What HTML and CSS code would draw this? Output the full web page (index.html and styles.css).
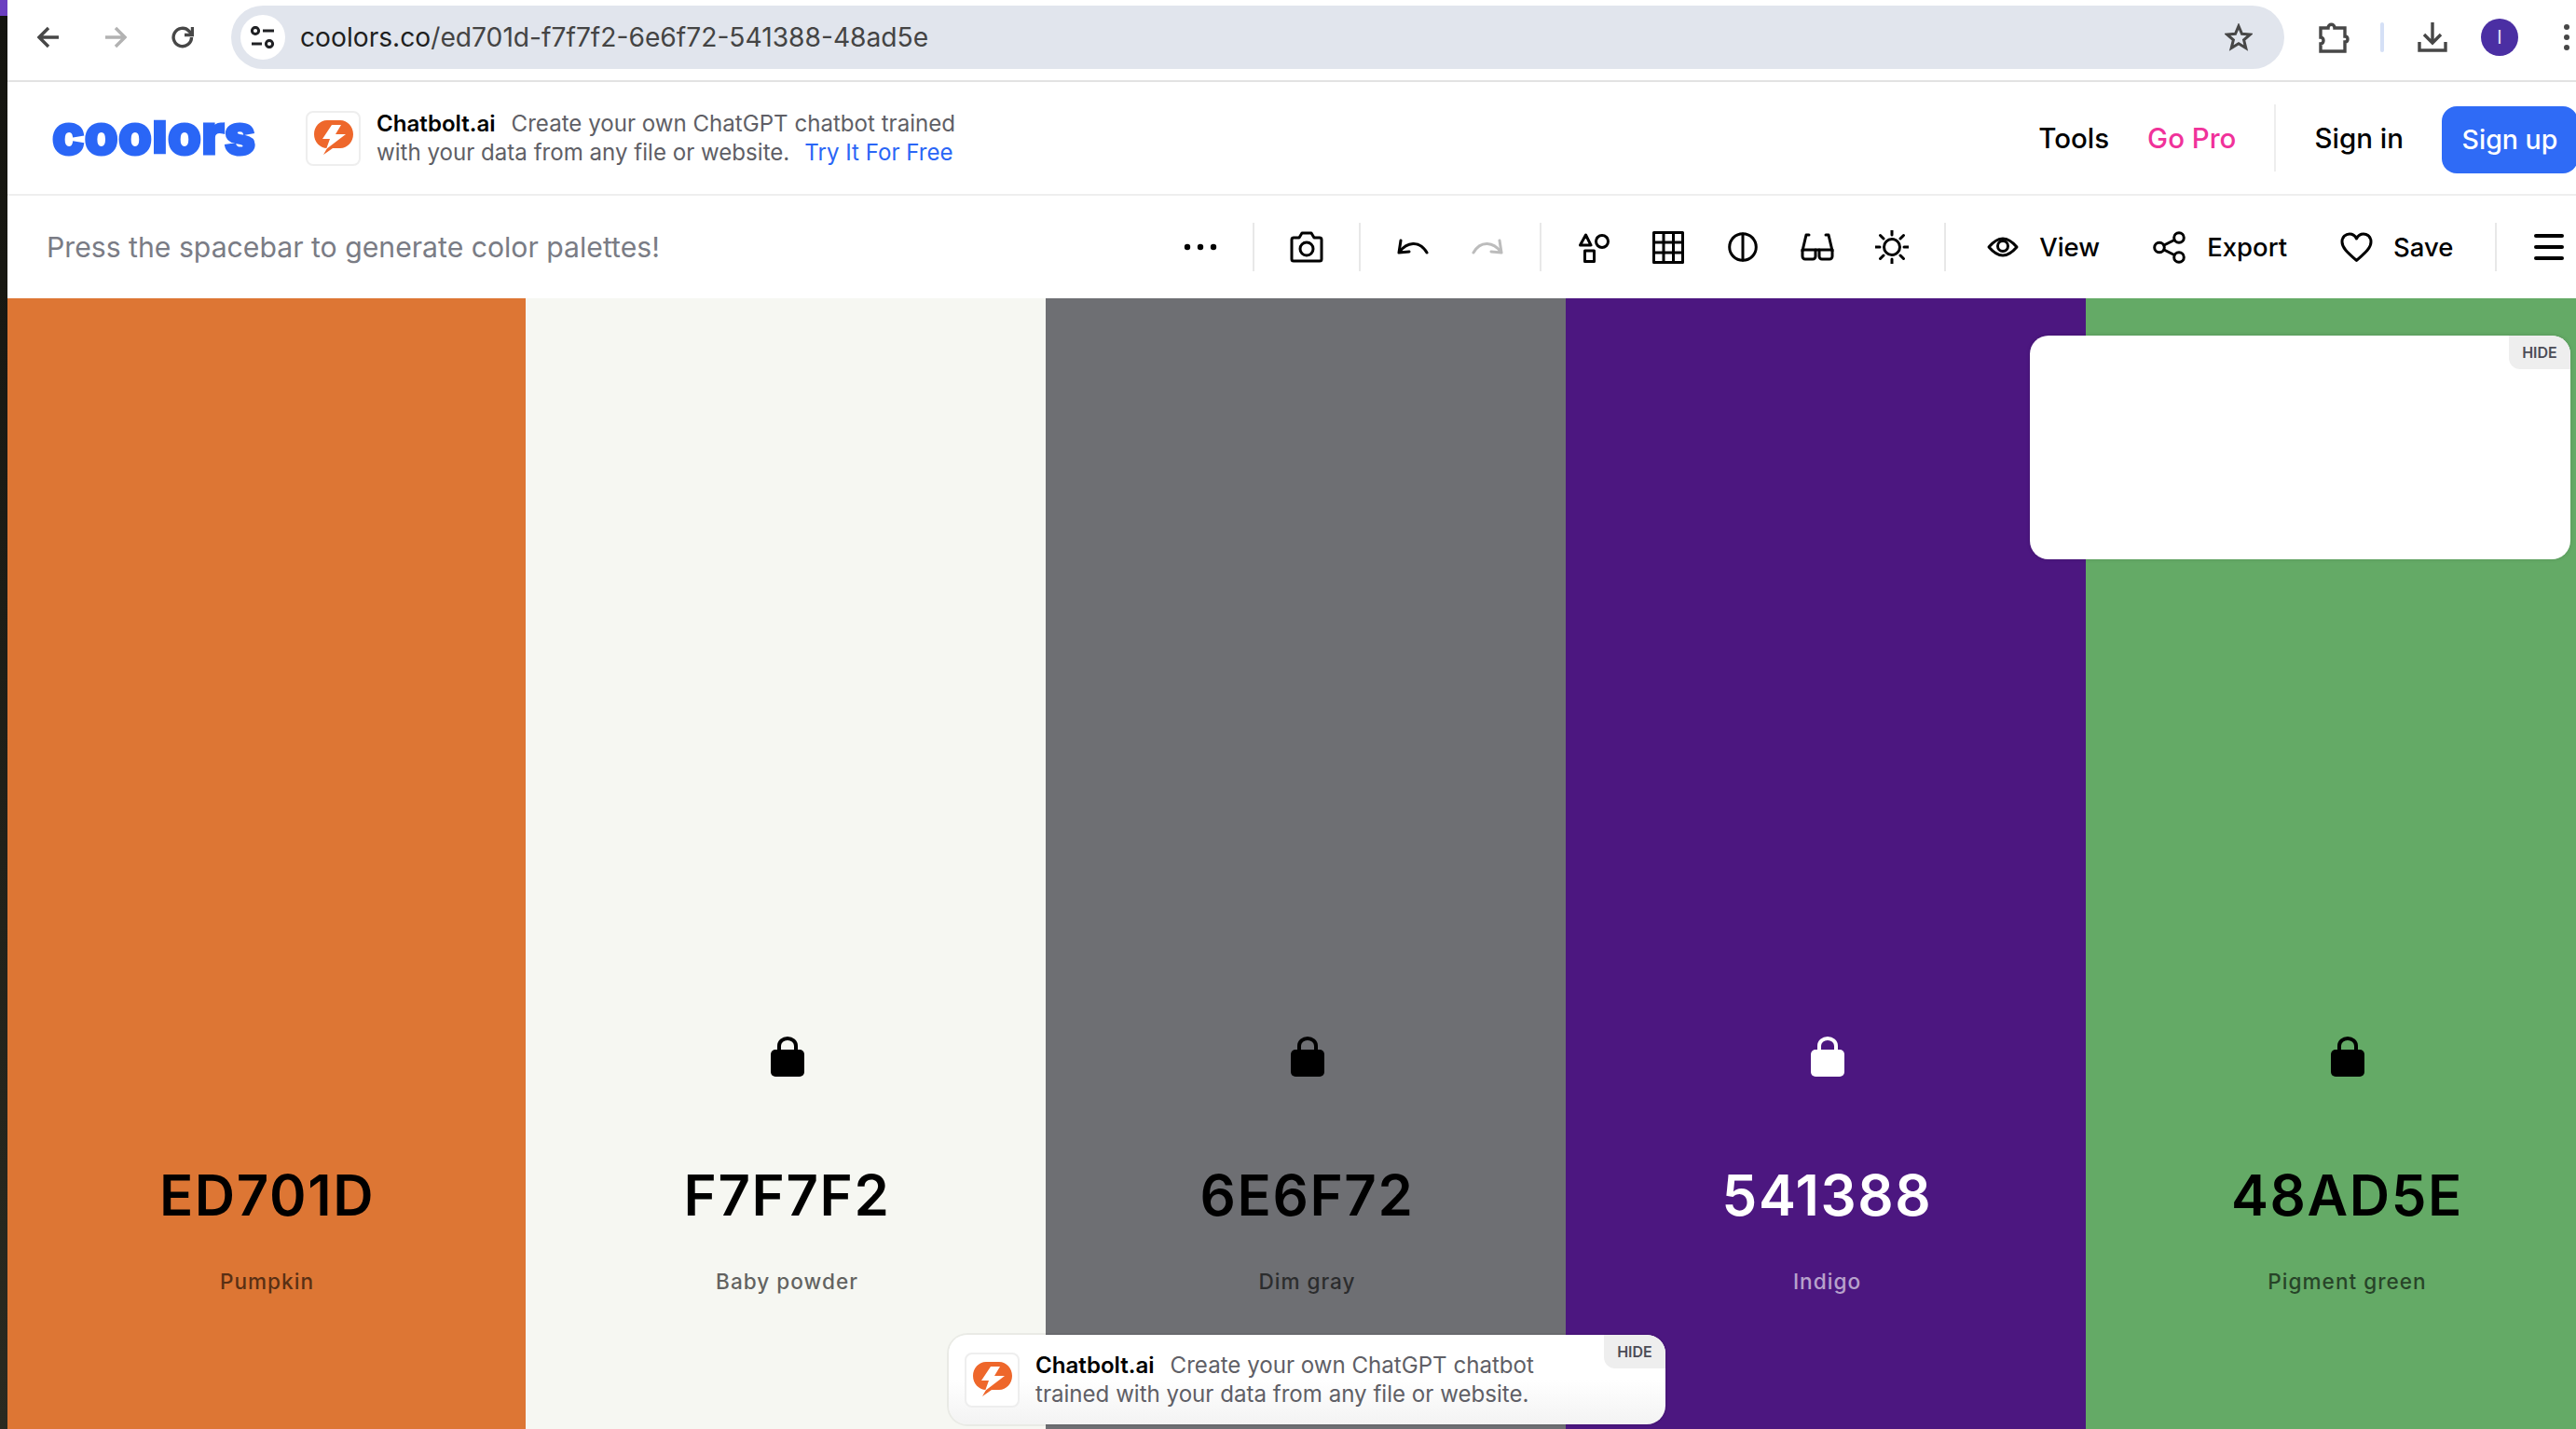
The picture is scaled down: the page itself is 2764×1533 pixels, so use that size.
FILE: index.html
```html
<!DOCTYPE html>
<html lang="en">
<head>
    <meta charset="UTF-8">
    <meta name="viewport" content="width=device-width, initial-scale=1.0">
    <title>Coolors palette</title>
    <link rel="stylesheet" href="styles.css">
</head>
<body>
<div class="screen">
    <div class="desktop-edge"></div>
    <div class="window">
        <div class="page">

            <!-- browser bar -->
            <div class="chrome">
                <div class="chrome-btn">
                    <svg width="24" height="24" viewBox="0 0 24 24" class="chrome-ico"><path d="M23 12H2M12 2 2 12l10 10"/></svg>
                </div>
                <div class="chrome-btn">
                    <svg width="24" height="24" viewBox="0 0 24 24" class="chrome-ico off"><path d="M1 12h21M12 2l10 10-10 10"/></svg>
                </div>
                <div class="chrome-btn">
                    <svg width="24" height="24" viewBox="0 0 24 24" class="chrome-ico"><path d="M21.500 12a9.700 9.700 0 1 1-2.800-6.800L22 8.500"/><path d="M22.500 1v8.500H14"/></svg>
                </div>
                <div class="address">
                    <div class="site-info">
                        <svg width="26" height="24" viewBox="0 0 26 24" class="tune-ico"><circle cx="5" cy="5" r="3.600"/><path d="M13 5h12M1 19h11"/><circle cx="20" cy="19" r="3.600"/></svg>
                    </div>
                    <span class="url">coolors.co<span class="url-path">/ed701d-f7f7f2-6e6f72-541388-48ad5e</span></span>
                    <svg width="30" height="30" viewBox="0 0 30 30" class="chrome-ico star"><path d="m15 3 3.500 8.300 9 .7-6.900 5.800 2.200 8.800-7.800-4.800-7.800 4.800 2.200-8.800L2.500 12l9-.7z"/></svg>
                </div>
                <div class="chrome-btn">
                    <svg width="34" height="34" viewBox="0 0 34 34" class="chrome-ico"><path d="M3 7h8c0-5 7-5 7 0h11v9c4 0 4 6 0 6v10H3v-8c4 0 4-7 0-7z"/></svg>
                </div>
                <div class="chrome-divider"></div>
                <div class="chrome-btn">
                    <svg width="32" height="32" viewBox="0 0 32 32" class="chrome-ico"><path d="M16 0v21M7 13l9 9 9-9M2 21v9h28v-9"/></svg>
                </div>
                <div class="chrome-btn"><div class="avatar">I</div></div>
                <div class="chrome-btn">
                    <div class="kebab"><span></span><span></span><span></span></div>
                </div>
            </div>

            <!-- top nav with sponsor -->
            <div class="topnav">
                <div class="logo">coo<span class="logo-l">l</span>ors</div>
                <div class="ad-logo">
                    <svg width="42" height="38" viewBox="0 0 42 38"><path class="bolt-bg" d="M14 0h14c8 0 14 7 14 15s-6 15-14 15H20L10 37l4-7C6 30 0 23 0 15S6 0 14 0z"/><path class="bolt-fg" d="M19 5 9 20h8l-4 11 21-16H23l6-10z"/></svg>
                </div>
                <div class="ad-text">
                    <b>Chatbolt.ai</b><span class="ad-gap">Create your own ChatGPT chatbot trained</span><br>
                    with your data from any file or website.<a class="ad-link" href="#">Try It For Free</a>
                </div>
                <div class="nav-right">
                    <a class="nav-link" href="#">Tools</a>
                    <a class="nav-link pro" href="#">Go Pro</a>
                    <div class="nav-divider"></div>
                    <a class="nav-link" href="#">Sign in</a>
                    <a class="signup" href="#">Sign up</a>
                </div>
            </div>

            <!-- toolbar -->
            <div class="toolbar">
                <div class="hint">Press the spacebar to generate color palettes!</div>
                <div class="tool-group">
                    <div class="tool">
                        <svg width="36" height="8" viewBox="0 0 36 8" class="solid"><circle cx="4" cy="4" r="3.200"/><circle cx="18" cy="4" r="3.200"/><circle cx="32" cy="4" r="3.200"/></svg>
                    </div>
                </div>
                <div class="tool-group">
                    <div class="tool">
                        <svg width="36" height="34" viewBox="0 0 36 34" class="line"><path d="M4 7h6l3-5h10l3 5h6a2 2 0 0 1 2 2v21a2 2 0 0 1-2 2H4a2 2 0 0 1-2-2V9a2 2 0 0 1 2-2z"/><circle cx="18" cy="19" r="7"/></svg>
                    </div>
                </div>
                <div class="tool-group">
                    <div class="tool">
                        <svg width="34" height="18" viewBox="0 0 34 18" class="line"><path d="M4 2 2 15l11-1M3 14C10 4 24 1 32 15"/></svg>
                    </div>
                    <div class="tool">
                        <svg width="34" height="18" viewBox="0 0 34 18" class="line faded"><path d="m30 2 2 13-11-1M31 14C24 4 10 1 2 15"/></svg>
                    </div>
                </div>
                <div class="tool-group">
                    <div class="tool">
                        <svg width="34" height="33" viewBox="0 0 34 33" class="line"><path d="M8.500 3 14 14H2.500z"/><circle cx="26" cy="10" r="6.500"/><rect x="7.500" y="20" width="10" height="11.500"/></svg>
                    </div>
                    <div class="tool">
                        <svg width="34" height="35" viewBox="0 0 34 35" class="line"><rect x="1.500" y="1.500" width="31" height="32"/><path d="M12 1.500v32M22.500 1.500v32M1.500 12h31M1.500 23h31"/></svg>
                    </div>
                    <div class="tool">
                        <svg width="32" height="32" viewBox="0 0 32 32" class="line"><circle cx="16" cy="16" r="14.300"/><path d="M16 2v28"/></svg>
                    </div>
                    <div class="tool">
                        <svg width="36" height="30" viewBox="0 0 36 30" class="line"><path d="M9 2H6L2 19M27 2h3l4 17M2 18h32"/><path d="M2 18v7a3 3 0 0 0 3 3h8a3 3 0 0 0 3-3v-7M20 18v7a3 3 0 0 0 3 3h8a3 3 0 0 0 3-3v-7"/></svg>
                    </div>
                    <div class="tool">
                        <svg width="36" height="36" viewBox="0 0 36 36" class="line"><circle cx="18" cy="18" r="8.500"/><path d="M18 0v5M18 31v5M0 18h5M31 18h5M5.500 5.500 9 9M27 27l3.500 3.500M5.500 30.500 9 27M27 9l3.500-3.500"/></svg>
                    </div>
                </div>
                <div class="tool-group">
                    <div class="text-tool">
                        <svg width="34" height="22" viewBox="0 0 34 22" class="line"><path d="M2 11C8 4 12 2 17 2s9 2 15 9c-6 7-10 9-15 9S8 18 2 11z"/><circle cx="17" cy="10" r="5.500"/></svg>
                        <span>View</span>
                    </div>
                    <div class="text-tool">
                        <svg width="36" height="35" viewBox="0 0 36 35" class="line"><circle cx="7" cy="17.500" r="5.300"/><circle cx="28" cy="7" r="5.300"/><circle cx="28" cy="28" r="5.300"/><path d="m12 15 11-5.500M12 20l11 5.500"/></svg>
                        <span>Export</span>
                    </div>
                    <div class="text-tool">
                        <svg width="35" height="33" viewBox="0 0 35 33" class="line"><path d="M17.500 30.500C8 22 2 17 2 10.500 2 5 6 2 10 2c3.500 0 6 1.800 7.500 5 1.500-3.200 4-5 7.500-5 4 0 8 3 8 8.500 0 6.500-6 11.500-15.500 20z"/></svg>
                        <span>Save</span>
                    </div>
                </div>
                <div class="tool-group last">
                    <div class="tool">
                        <div class="burger"><span></span><span></span><span></span></div>
                    </div>
                </div>
            </div>

            <!-- palette -->
            <div class="palette">
                <div class="swatch pumpkin">
                    <div class="lock-slot"></div>
                    <div class="hex">ED701D</div>
                    <div class="name">Pumpkin</div>
                </div>
                <div class="swatch powder">
                    <div class="lock-slot">
                        <svg width="36" height="43" viewBox="0 0 36 43" class="lock"><path class="shackle" d="M9 18V10a9 8 0 0 1 18 0v8"/><rect y="14" width="36" height="29" rx="5"/></svg>
                    </div>
                    <div class="hex">F7F7F2</div>
                    <div class="name">Baby powder</div>
                </div>
                <div class="swatch dimgray">
                    <div class="lock-slot">
                        <svg width="36" height="43" viewBox="0 0 36 43" class="lock"><path class="shackle" d="M9 18V10a9 8 0 0 1 18 0v8"/><rect y="14" width="36" height="29" rx="5"/></svg>
                    </div>
                    <div class="hex">6E6F72</div>
                    <div class="name">Dim gray</div>
                </div>
                <div class="swatch indigo">
                    <div class="lock-slot">
                        <svg width="36" height="43" viewBox="0 0 36 43" class="lock"><path class="shackle" d="M9 18V10a9 8 0 0 1 18 0v8"/><rect y="14" width="36" height="29" rx="5"/></svg>
                    </div>
                    <div class="hex">541388</div>
                    <div class="name">Indigo</div>
                </div>
                <div class="swatch green">
                    <div class="lock-slot">
                        <svg width="36" height="43" viewBox="0 0 36 43" class="lock"><path class="shackle" d="M9 18V10a9 8 0 0 1 18 0v8"/><rect y="14" width="36" height="29" rx="5"/></svg>
                    </div>
                    <div class="hex">48AD5E</div>
                    <div class="name">Pigment green</div>
                </div>

                <div class="ad-card">
                    <div class="hide">HIDE</div>
                </div>

                <div class="ad-bottom">
                    <div class="hide">HIDE</div>
                    <div class="ad-logo">
                        <svg width="42" height="38" viewBox="0 0 42 38"><path class="bolt-bg" d="M14 0h14c8 0 14 7 14 15s-6 15-14 15H20L10 37l4-7C6 30 0 23 0 15S6 0 14 0z"/><path class="bolt-fg" d="M19 5 9 20h8l-4 11 21-16H23l6-10z"/></svg>
                    </div>
                    <div class="ad-text">
                        <b>Chatbolt.ai</b><span class="ad-gap">Create your own ChatGPT chatbot</span><br>
                        trained with your data from any file or website.
                    </div>
                </div>
            </div>

        </div>
    </div>
</div>
</body>
</html>
```

FILE: styles.css
```css
* {
    box-sizing: border-box;
}

html, body {
    margin: 0;
    height: 100%;
    overflow: hidden;
}

body {
    font-family: 'Inter', 'Liberation Sans', sans-serif;
    background: #fff;
    color: #000;
}

a {
    text-decoration: none;
}

.screen {
    display: flex;
    height: 1533px;
}

.desktop-edge {
    flex: 0 0 8px;
    background: linear-gradient(to bottom, #6b3fc0 0, #6b3fc0 17px, #14140f 17px, #2a2a20 100%);
}

.window {
    flex: 1;
    overflow: hidden;
    background: #fff;
}

.page {
    width: 2790px;
    height: 1533px;
    display: flex;
    flex-direction: column;
}

/* browser bar */
.chrome {
    flex: 0 0 88px;
    display: flex;
    align-items: flex-start;
    padding: 4px 8px 0 8px;
    border-bottom: 2px solid #e2e2e2;
}

.chrome-btn {
    flex: 0 0 72px;
    height: 72px;
    display: flex;
    align-items: center;
    justify-content: center;
}

.chrome-ico {
    fill: none;
    stroke: #474747;
    stroke-width: 3.4;
}

.chrome-ico.off {
    stroke: #b2b2b2;
}

.address {
    flex: 1;
    height: 68px;
    margin: 2px 17px 0 16px;
    padding: 0 12px 0 10px;
    border-radius: 34px;
    background: #e1e5ed;
    display: flex;
    align-items: center;
}

.site-info {
    width: 48px;
    height: 48px;
    border-radius: 50%;
    background: #fff;
    display: flex;
    align-items: center;
    justify-content: center;
}

.tune-ico {
    fill: none;
    stroke: #202124;
    stroke-width: 3;
}

.url {
    margin-left: 16px;
    flex: 1;
    font-size: 28.2px;
    color: #1f1f1f;
}

.url-path {
    color: #444;
}

.star {
    margin-right: 22px;
    stroke-width: 3;
}

.chrome-divider {
    width: 4px;
    height: 32px;
    margin: 20px 16px 0 14px;
    border-radius: 2px;
    background: #d5e0f6;
}

.avatar {
    width: 40px;
    height: 40px;
    border-radius: 50%;
    background: #4b2fa3;
    color: #e6e0f5;
    font-size: 20px;
    line-height: 40px;
    text-align: center;
}

.kebab {
    display: flex;
    flex-direction: column;
    gap: 5px;
}

.kebab span {
    width: 6px;
    height: 6px;
    border-radius: 50%;
    background: #474747;
}

/* nav */
.topnav {
    flex: 0 0 122px;
    display: flex;
    align-items: center;
    padding: 0 32px 0 48px;
    border-bottom: 2px solid #eee;
}

.logo {
    width: 272px;
    margin-bottom: 8px;
    font-size: 58px;
    line-height: 60px;
    font-weight: 800;
    letter-spacing: 0.3px;
    color: #2a66f6;
    -webkit-text-stroke: 3px #2a66f6;
    white-space: nowrap;
}

.logo-l {
    display: inline-block;
    transform: scaleY(0.8);
    transform-origin: 50% 80%;
}

.ad-logo {
    flex: 0 0 59px;
    height: 59px;
    border: 2px solid #eee;
    border-radius: 8px;
    background: #fff;
    display: flex;
    align-items: center;
    justify-content: center;
}

.bolt-bg {
    fill: #ee672b;
}

.bolt-fg {
    fill: #fff;
}

.ad-text {
    margin-left: 17px;
    font-size: 24.1px;
    line-height: 31px;
    color: #5f5f66;
    white-space: nowrap;
}

.ad-text b {
    font-weight: 600;
    color: #000;
}

.ad-gap {
    margin-left: 17px;
}

.ad-link {
    margin-left: 16px;
    color: #2a66f6;
}

.nav-right {
    margin-left: auto;
    display: flex;
    align-items: center;
    gap: 41px;
}

.nav-link {
    font-size: 29.5px;
    font-weight: 500;
    color: #000;
}

.nav-link.pro {
    color: #f0329a;
}

.nav-divider {
    width: 2px;
    height: 72px;
    background: #eee;
}

.signup {
    width: 146px;
    height: 72px;
    margin-top: 4px;
    border-radius: 16px;
    background: #2f6bf6;
    color: #fff;
    font-size: 28.5px;
    font-weight: 500;
    line-height: 72px;
    text-align: center;
}

/* toolbar */
.toolbar {
    flex: 0 0 110px;
    display: flex;
    align-items: center;
    padding-left: 42px;
    padding-right: 7px;
}

.hint {
    font-size: 30.2px;
    color: #7a7c85;
    white-space: nowrap;
    margin-right: auto;
}

.tool-group {
    height: 52px;
    padding: 0 16px;
    display: flex;
    align-items: center;
    border-right: 2px solid #e8e8e8;
}

.tool-group.last {
    border-right: 0;
}

.tool {
    width: 80px;
    display: flex;
    align-items: center;
    justify-content: center;
}

.line {
    fill: none;
    stroke: #000;
    stroke-width: 3;
    stroke-linecap: round;
    stroke-linejoin: round;
}

.line.faded {
    stroke: #bcbcbc;
}

.solid {
    fill: #000;
}

.text-tool {
    display: flex;
    align-items: center;
    gap: 22px;
    padding: 0 28.5px;
    font-size: 27.5px;
    font-weight: 500;
}

.burger {
    display: flex;
    flex-direction: column;
    gap: 8px;
}

.burger span {
    width: 32px;
    height: 4px;
    border-radius: 2px;
    background: #000;
}

/* palette */
.palette {
    flex: 1;
    display: flex;
    position: relative;
}

.swatch {
    flex: 0 0 558px;
    display: flex;
    flex-direction: column;
    align-items: center;
    justify-content: flex-end;
    padding-left: 3px;
    padding-bottom: 144px;
    color: #000;
}

.pumpkin {
    flex-basis: 556px;
    padding-left: 1px;
    background: #dd7634;
}

.powder { background: #f6f7f2; }
.dimgray { background: #6e6f73; }
.indigo { background: #4c1780; color: #fff; }
.green { background: #64aa66; }

.lock-slot {
    height: 43px;
    margin-bottom: 91px;
}

.lock {
    fill: currentColor;
}

.shackle {
    fill: none;
    stroke: currentColor;
    stroke-width: 4;
}

.hex {
    font-size: 60px;
    line-height: 72px;
    font-weight: 600;
    letter-spacing: 1.6px;
}

.name {
    margin-top: 43px;
    font-size: 22.6px;
    line-height: 28px;
    font-weight: 500;
    letter-spacing: 1px;
    opacity: 0.6;
}

/* ad overlays */
.ad-card {
    position: absolute;
    left: 2170px;
    top: 40px;
    width: 580px;
    height: 240px;
    border-radius: 20px;
    background: #fff;
    box-shadow: 0 0 4px rgba(0, 0, 0, 0.15);
    overflow: hidden;
}

.hide {
    position: absolute;
    top: 0;
    right: 0;
    width: 66px;
    height: 36px;
    border-bottom-left-radius: 12px;
    background: #eee;
    color: #4c4c56;
    font-size: 16px;
    font-weight: 600;
    line-height: 36px;
    text-align: center;
}

.ad-bottom {
    position: absolute;
    left: 1010px;
    top: 1112px;
    width: 769px;
    height: 96px;
    padding-left: 17px;
    display: flex;
    align-items: center;
    border-radius: 20px;
    background: linear-gradient(to bottom, #fff 50%, #f3f3f3 100%);
    box-shadow: 0 0 0 2px rgba(0, 0, 0, 0.05);
    overflow: hidden;
}
```
